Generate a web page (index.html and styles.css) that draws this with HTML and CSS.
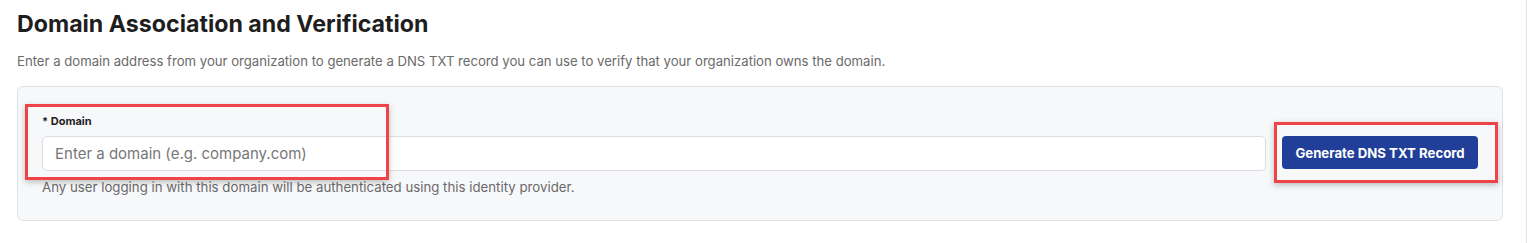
FILE: index.html
```html
<!DOCTYPE html>
<html lang="en">
<head>
  <meta charset="UTF-8">
  <title>Domain Association and Verification</title>
  <link rel="stylesheet" href="styles.css">
</head>
<body>

  <div class="page">
    <h1>Domain Association and Verification</h1>
    <p class="intro">Enter a domain address from your organization to generate a DNS TXT record you can use to verify that your organization owns the domain.</p>

    <!-- Domain card -->
    <div class="card">
      <label class="field-label" for="domain">* Domain</label>
      <div class="field-row">
        <input type="text" id="domain" placeholder="Enter a domain (e.g. company.com)" />
        <button type="button" class="generate-btn">Generate DNS TXT Record</button>
      </div>
      <p class="hint">Any user logging in with this domain will be authenticated using this identity provider.</p>

      <!-- Annotation boxes -->
      <div class="mark mark-field"></div>
      <div class="mark mark-btn"></div>
    </div>
  </div>

</body>
</html>
```

FILE: styles.css
```css
body {
  margin: 0;
  padding: 0;
  background: #fff;
  font-family: Inter, "Noto Sans", sans-serif;
  height: 243px;
  overflow: hidden;
}

.page {
  width: 1509px;
  height: 243px;
  padding-left: 17px;
  border-right: 1px solid #e2e2e2;
}

h1 {
  margin: 0;
  padding-top: 9px;
  font-size: 23.2px;
  line-height: 30px;
  font-weight: 700;
  color: #1e1e1e;
}

.intro {
  margin: 13px 0 0;
  font-size: 13.15px;
  line-height: 18px;
  color: #6a6a6a;
}

.card {
  position: relative;
  margin-top: 16px;
  width: 1436px;
  padding: 27px 24px 25px;
  background: #f7f8fa;
  border: 1px solid #dfe0e3;
  border-radius: 6px;
}

.field-label {
  display: block;
  font-size: 11px;
  line-height: 14px;
  font-weight: 700;
  color: #1e1e1e;
  margin-bottom: 8px;
}

.field-row {
  display: flex;
  gap: 16px;
  align-items: flex-start;
}

.field-row input {
  flex: 1;
  height: 35px;
  box-sizing: border-box;
  padding: 0 12px;
  font-family: inherit;
  font-size: 15px;
  color: #333;
  background: #fff;
  border: 1px solid #dcdde1;
  border-radius: 5px;
  outline: none;
}

::placeholder {
  color: #777;
}

.generate-btn {
  width: 196px;
  height: 33px;
  background-color: #213e98;
  color: #fff;
  border: none;
  border-radius: 4px;
  font-family: inherit;
  font-size: 13.2px;
  font-weight: 700;
  cursor: pointer;
}

.hint {
  margin: 8px 0 0;
  font-size: 13.25px;
  line-height: 16px;
  color: #6a6a6a;
}

.mark {
  position: absolute;
  border: 3px solid #ef4249;
  box-shadow: 0 2px 6px rgba(0, 0, 0, 0.25);
  pointer-events: none;
}

.mark-field {
  left: 7px;
  top: 17px;
  width: 358px;
  height: 70px;
}

.mark-btn {
  left: 1256px;
  top: 35px;
  width: 218px;
  height: 55px;
}
```
